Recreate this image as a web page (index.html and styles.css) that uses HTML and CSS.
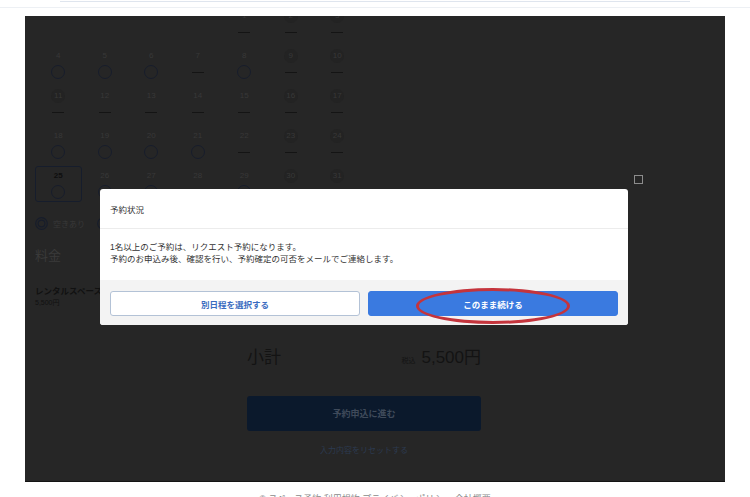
FILE: index.html
```html
<!DOCTYPE html>
<html lang="ja">
<head>
    <meta charset="utf-8">
    <title>予約状況</title>
    <link rel="stylesheet" href="styles.css">
</head>
<body>

    <div class="topbar"><div class="topbar-line"></div></div>

    <div class="screen">

        <div class="calendar">
            <div class="day"></div>
            <div class="day"></div>
            <div class="day"></div>
            <div class="day"></div>
            <div class="day"><span class="num">1</span><span class="mark none"></span></div>
            <div class="day off"><span class="num">2</span><span class="mark none"></span></div>
            <div class="day off"><span class="num">3</span><span class="mark none"></span></div>

            <div class="day"><span class="num">4</span><span class="mark free"></span></div>
            <div class="day"><span class="num">5</span><span class="mark free"></span></div>
            <div class="day"><span class="num">6</span><span class="mark free"></span></div>
            <div class="day"><span class="num">7</span><span class="mark none"></span></div>
            <div class="day"><span class="num">8</span><span class="mark free"></span></div>
            <div class="day off"><span class="num">9</span><span class="mark none"></span></div>
            <div class="day off"><span class="num">10</span><span class="mark none"></span></div>

            <div class="day off"><span class="num">11</span><span class="mark none"></span></div>
            <div class="day"><span class="num">12</span><span class="mark none"></span></div>
            <div class="day"><span class="num">13</span><span class="mark none"></span></div>
            <div class="day"><span class="num">14</span><span class="mark none"></span></div>
            <div class="day"><span class="num">15</span><span class="mark none"></span></div>
            <div class="day off"><span class="num">16</span><span class="mark none"></span></div>
            <div class="day off"><span class="num">17</span><span class="mark none"></span></div>

            <div class="day"><span class="num">18</span><span class="mark free"></span></div>
            <div class="day"><span class="num">19</span><span class="mark free"></span></div>
            <div class="day"><span class="num">20</span><span class="mark free"></span></div>
            <div class="day"><span class="num">21</span><span class="mark free"></span></div>
            <div class="day"><span class="num">22</span><span class="mark none"></span></div>
            <div class="day off"><span class="num">23</span><span class="mark none"></span></div>
            <div class="day off"><span class="num">24</span><span class="mark none"></span></div>

            <div class="day sel"><span class="num">25</span><span class="mark free"></span></div>
            <div class="day"><span class="num">26</span><span class="mark free"></span></div>
            <div class="day"><span class="num">27</span><span class="mark free"></span></div>
            <div class="day"><span class="num">28</span><span class="mark none"></span></div>
            <div class="day"><span class="num">29</span><span class="mark free"></span></div>
            <div class="day off"><span class="num">30</span><span class="mark none"></span></div>
            <div class="day off"><span class="num">31</span><span class="mark none"></span></div>
        </div>

        <div class="legend">
            <span class="legend-item">
                <svg width="13" height="13" viewBox="0 0 13 13"><circle cx="6.5" cy="6.5" r="5.8" fill="none" stroke="#171d2b" stroke-width="1.2"/><circle cx="6.5" cy="6.5" r="3.4" fill="none" stroke="#171d2b" stroke-width="1.2"/></svg>
                空きあり
            </span>
            <span class="legend-item">
                <svg width="13" height="13" viewBox="0 0 13 13"><circle cx="6.5" cy="6.5" r="5.8" fill="none" stroke="#171d2b" stroke-width="1.2"/></svg>
                残りわずか
            </span>
        </div>

        <h2 class="fee-title">料金</h2>

        <div class="fee-item">
            <div class="fee-name">レンタルスペース</div>
            <div class="fee-price">5,500円</div>
        </div>

        <div class="summary">
            <div class="subtotal">
                <span class="subtotal-label">小計</span>
                <span class="subtotal-price"><small>税込</small>5,500円</span>
            </div>
            <button class="submit">予約申込に進む</button>
            <div class="reset">入力内容をリセットする</div>
        </div>

        <span class="check"></span>

        <div class="modal">
            <div class="modal-head">予約状況</div>
            <div class="modal-body">
                1名以上のご予約は、リクエスト予約になります。<br>
                予約のお申込み後、確認を行い、予約確定の可否をメールでご連絡します。
            </div>
            <div class="modal-foot">
                <button class="btn btn-ghost">別日程を選択する</button>
                <button class="btn btn-primary">このまま続ける</button>
            </div>
        </div>

        <span class="circled"></span>
    </div>

    <div class="footer">© スペース予約  利用規約  プライバシーポリシー  会社概要</div>

</body>
</html>
```

FILE: styles.css
```css
body {
    margin: 0;
    height: 497px;
    overflow: hidden;
    background: #fff;
    font-family: "Liberation Sans", "Noto Sans CJK JP", sans-serif;
}
.topbar {
    height: 6px;
    border-bottom: 1px solid #edf0f4;
    margin-bottom: 8px;
}
.topbar-line {
    height: 1px;
    margin: 1px 60px 0;
    background: #dfe5ee;
}
.screen {
    position: relative;
    margin: 0 25px;
    height: 466px;
    padding: 0 10px;
    box-sizing: border-box;
    overflow: hidden;
    background: #262626;
    border-bottom: 1px solid #141414;
}

/* calendar */
.calendar {
    display: grid;
    grid-template-columns: repeat(7, 46.5px);
    row-gap: 4px;
    margin-top: -10px;
}
.day {
    height: 36px;
    padding-top: 4px;
    box-sizing: border-box;
    display: flex;
    flex-direction: column;
    align-items: center;
}
.num {
    position: relative;
    z-index: 1;
    height: 12px;
    line-height: 12px;
    font-size: 8px;
    color: #383838;
}
.off .num::before {
    content: "";
    position: absolute;
    left: 50%;
    top: 50%;
    width: 14px;
    height: 14px;
    margin: -7px 0 0 -7px;
    border-radius: 50%;
    background: #232323;
    z-index: -1;
}
.mark {
    width: 14px;
    height: 14px;
    margin-top: 3px;
    box-sizing: border-box;
    display: flex;
    align-items: center;
    justify-content: center;
}
.mark.free {
    border: 1.5px solid #171d2b;
    border-radius: 50%;
}
.mark.none::after {
    content: "";
    width: 12px;
    height: 1px;
    background: #141414;
}
.day.sel {
    border: 1.5px solid #161d2c;
    border-radius: 3px;
    padding-top: 2.5px;
}
.day.sel .num {
    color: #0e0e0e;
    font-weight: bold;
}

/* legend and fees */
.legend {
    display: flex;
    gap: 12px;
    height: 14px;
    margin-top: 14px;
    font-size: 8px;
    color: #383838;
}
.legend-item {
    display: flex;
    align-items: center;
    gap: 5px;
}
.fee-title {
    margin: 17px 0 0;
    height: 18px;
    line-height: 18px;
    font-size: 13px;
    font-weight: normal;
    color: #3a3a3a;
}
.fee-item {
    margin-top: 21px;
    color: #111;
}
.fee-name {
    font-size: 8.5px;
    font-weight: bold;
    line-height: 10px;
}
.fee-price {
    margin-top: 2px;
    font-size: 7px;
    line-height: 10px;
}

/* summary */
.summary {
    width: 234px;
    margin: 38px 0 0 212px;
}
.subtotal {
    display: flex;
    justify-content: space-between;
    align-items: baseline;
    height: 24px;
    line-height: 24px;
    color: #131313;
}
.subtotal-label {
    font-size: 17px;
}
.subtotal-price {
    font-size: 17px;
}
.subtotal-price small {
    font-size: 7px;
    margin-right: 6px;
}
.submit {
    display: block;
    width: 100%;
    height: 35px;
    margin-top: 26px;
    border: 0;
    border-radius: 3px;
    background: #0b192c;
    color: #3f4a5a;
    font-family: inherit;
    font-size: 9px;
    font-weight: bold;
}
.reset {
    margin-top: 14px;
    line-height: 12px;
    font-size: 8px;
    text-align: center;
    color: #2c3a50;
}
.check {
    position: absolute;
    left: 609px;
    top: 159px;
    width: 7px;
    height: 7px;
    border: 1px solid #8c8c8c;
}

/* modal */
.modal {
    position: absolute;
    left: 75px;
    top: 173px;
    width: 528px;
    border-radius: 3px;
    overflow: hidden;
    background: #fff;
}
.modal-head {
    height: 40px;
    padding: 0 10px;
    box-sizing: border-box;
    display: flex;
    align-items: center;
    border-bottom: 1px solid #ececec;
    font-size: 8.5px;
    color: #333;
}
.modal-body {
    height: 51px;
    padding: 12px 10px 0;
    box-sizing: border-box;
    font-size: 8.5px;
    line-height: 12px;
    color: #333;
}
.modal-foot {
    display: flex;
    gap: 8px;
    padding: 11px 10px 9px;
    background: #f3f3f3;
}
.btn {
    flex: 1;
    height: 25px;
    border-radius: 3px;
    font-family: inherit;
    font-size: 8.5px;
    font-weight: bold;
}
.btn-ghost {
    background: #fff;
    border: 1px solid #b3c2d6;
    color: #3a6cc0;
}
.btn-primary {
    background: #3a7ae0;
    border: 1px solid #3a7ae0;
    color: #fff;
}
.circled {
    position: absolute;
    left: 391px;
    top: 272px;
    width: 154px;
    height: 36px;
    box-sizing: border-box;
    border: 3px solid #c4343c;
    border-radius: 50%;
}

.footer {
    padding-top: 10px;
    text-align: center;
    font-size: 9px;
    color: #8a8a8a;
}
```
